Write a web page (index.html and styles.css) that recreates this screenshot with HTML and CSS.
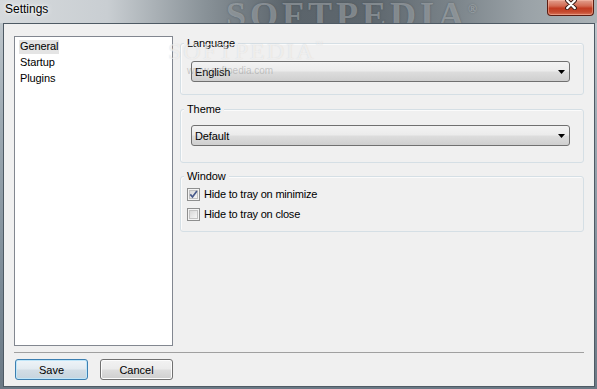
FILE: index.html
```html
<!DOCTYPE html>
<html>
<head>
<meta charset="utf-8">
<title>Settings</title>
<link rel="stylesheet" href="styles.css">
</head>
<body>
<div class="window">
  <div class="titlebar">
    <span class="title">Settings</span>
    <span class="wm-big">SOFTPEDIA<span class="reg">®</span></span>
    <button class="close" aria-label="Close">
      <svg width="12" height="11" viewBox="0 0 12 11"><path d="M2.2 1.5l7.6 7.6M9.8 1.5l-7.6 7.6" stroke="#3a1a14" stroke-width="4.2" stroke-linecap="round"/><path d="M2.2 1.5l7.6 7.6M9.8 1.5l-7.6 7.6" stroke="#ffffff" stroke-width="2.2" stroke-linecap="round"/></svg>
    </button>
  </div>
  <div class="frame">
    <div class="client">
      <div class="main">
        <ul class="list">
          <li><span class="sel">General</span></li>
          <li>Startup</li>
          <li>Plugins</li>
        </ul>
        <div class="groups">
          <div class="group g-lang">
            <span class="glabel">Language</span>
            <div class="combo"><span>English</span><svg class="arrow" width="7" height="4" viewBox="0 0 7 4"><path d="M0 0h7L3.5 4z" fill="#000"/></svg></div>
          </div>
          <div class="group g-theme">
            <span class="glabel">Theme</span>
            <div class="combo"><span>Default</span><svg class="arrow" width="7" height="4" viewBox="0 0 7 4"><path d="M0 0h7L3.5 4z" fill="#000"/></svg></div>
          </div>
          <div class="group g-win">
            <span class="glabel">Window</span>
            <label class="check">
              <svg width="13" height="13" viewBox="0 0 13 13"><defs><linearGradient id="cb1" x1="0" y1="0" x2="1" y2="1"><stop offset="0" stop-color="#d6d6d6"/><stop offset="1" stop-color="#f7f7f7"/></linearGradient></defs><rect x=".5" y=".5" width="12" height="12" fill="#f4f4f4" stroke="#8e8f8f"/><rect x="2.5" y="2.5" width="8" height="8" fill="url(#cb1)" stroke="#c2c2c2"/><path d="M3.3 6.4l2.2 2.6 4.4-6" fill="none" stroke="#47598a" stroke-width="1.7"/></svg>
              <span>Hide to tray on minimize</span>
            </label>
            <label class="check">
              <svg width="13" height="13" viewBox="0 0 13 13"><defs><linearGradient id="cb2" x1="0" y1="0" x2="1" y2="1"><stop offset="0" stop-color="#d6d6d6"/><stop offset="1" stop-color="#f7f7f7"/></linearGradient></defs><rect x=".5" y=".5" width="12" height="12" fill="#f4f4f4" stroke="#8e8f8f"/><rect x="2.5" y="2.5" width="8" height="8" fill="url(#cb2)" stroke="#c2c2c2"/></svg>
              <span>Hide to tray on close</span>
            </label>
          </div>
        </div>
      </div>
      <div class="sep"></div>
      <div class="buttons">
        <button class="btn default">Save</button>
        <button class="btn">Cancel</button>
      </div>
    </div>
  </div>
  <span class="wm-small">SOFTPEDIA<span class="tm">™</span></span>
  <span class="wm-url">www.softpedia.com</span>
</div>
</body>
</html>
```
FILE: styles.css
```css
html, body {
  margin: 0;
  padding: 0;
}
body {
  width: 597px;
  height: 389px;
  overflow: hidden;
  font-family: "Liberation Sans", Arial, sans-serif;
  font-size: 11px;
  color: #000;
  background: #8796a2;
}
.window {
  position: relative;
  width: 597px;
  height: 389px;
  display: flex;
  flex-direction: column;
  background: linear-gradient(to bottom, #c5ccd1 0%, #9fabb4 30%, #7a8995 75%, #6b7985 100%);
}
.titlebar {
  position: relative;
  height: 23px;
  flex: none;
  display: flex;
  align-items: flex-start;
  overflow: hidden;
  background: linear-gradient(to right, #d6dadd 0%, #c9ced2 18%, #8a9399 34%, #5b646b 48%, #5d666d 62%, #7b848a 76%, #9aa2a7 88%, #aab2b6 100%);
}
.title {
  padding: 1px 0 0 5px;
  font-size: 12px;
  line-height: 16px;
  color: #000;
  text-shadow: 0 0 6px #fff, 0 0 3px #fff;
  position: relative;
  z-index: 1;
}
.wm-big {
  position: absolute;
  left: 226px;
  top: -9px;
  font-family: "Liberation Serif", "Times New Roman", serif;
  font-weight: bold;
  font-size: 36px;
  line-height: 36px;
  letter-spacing: 4px;
  color: rgba(205, 210, 214, 0.42);
  text-shadow: 0 0 2px rgba(40, 45, 50, 0.35);
}
.wm-big .reg {
  font-size: 12px;
  vertical-align: 14px;
  letter-spacing: 0;
}
.close {
  margin: 0 3px 0 auto;
  width: 47px;
  height: 16px;
  padding: 0;
  border: 1px solid #5c1d12;
  border-top: none;
  border-radius: 0 0 4px 4px;
  background: linear-gradient(to bottom, #e2a08f 0%, #d26a52 40%, #c13c22 55%, #c54a2f 80%, #d9765c 100%);
  box-shadow: inset 0 0 0 1px rgba(255, 200, 180, 0.45);
  display: flex;
  justify-content: center;
  align-items: flex-start;
  position: relative;
  z-index: 1;
}
.close svg {
  margin-top: -1px;
}
.frame {
  flex: 1;
  padding: 0 2px 2px 3px;
}
.client {
  box-sizing: border-box;
  height: 364px;
  background: #f0f0f0;
  border: 1px solid #4e5a64;
  padding: 12px 10px 6px 10px;
}
.main {
  display: flex;
  gap: 7px;
}
.list {
  box-sizing: border-box;
  margin: 0;
  padding: 1px 4px;
  list-style: none;
  width: 159px;
  height: 310px;
  background: #fff;
  border: 1px solid #828790;
}
.list li {
  height: 16px;
  line-height: 16px;
  white-space: nowrap;
  letter-spacing: -0.1px;
}
.list li:not(:first-child) {
  padding-left: 1px;
}
.sel {
  background: #e4e4e4;
  padding: 0 1px 2px;
}
.groups {
  width: 404px;
  display: flex;
  flex-direction: column;
  padding-top: 7px;
}
.group {
  position: relative;
  border: 1px solid #d5dfe5;
  border-radius: 3px;
  box-shadow: inset 1px 1px 0 #fbfbfb;
}
.glabel {
  position: absolute;
  left: 3px;
  top: -8px;
  padding: 0 3px;
  line-height: 14px;
  background: #f0f0f0;
  letter-spacing: -0.1px;
}
.g-lang {
  padding: 17px 13px 12px 10px;
}
.g-theme {
  margin-top: 14px;
  padding: 15px 13px 16px 10px;
}
.g-win {
  margin-top: 13px;
  padding: 7px 6px 7px 6px;
}
.combo {
  box-sizing: border-box;
  height: 21px;
  border: 1px solid #707070;
  border-radius: 3px;
  background: linear-gradient(to bottom, #f3f3f3 0%, #ebebeb 48%, #dddddd 52%, #cfcfcf 100%);
  display: flex;
  align-items: center;
  padding-left: 3px;
  letter-spacing: -0.1px;
}
.arrow {
  margin-left: auto;
  margin-right: 4px;
}
.check {
  display: flex;
  align-items: center;
  gap: 4px;
  height: 20px;
  letter-spacing: -0.2px;
}
.sep {
  width: 570px;
  height: 1px;
  margin-top: 6px;
  background: #a0a0a0;
}
.buttons {
  display: flex;
  gap: 12px;
  margin-top: 6px;
  padding-left: 1px;
}
.btn {
  box-sizing: border-box;
  width: 73px;
  height: 21px;
  padding: 0;
  border: 1px solid #707070;
  border-radius: 3px;
  font-family: "Liberation Sans", Arial, sans-serif;
  font-size: 11px;
  color: #000;
  background: linear-gradient(to bottom, #f2f2f2 0%, #ebebeb 48%, #dddddd 52%, #cfcfcf 100%);
  box-shadow: inset 0 0 0 1px #fcfcfc;
}
.btn.default {
  border-color: #3c7fb1;
  background: linear-gradient(to bottom, #eef4f8 0%, #e2eaf0 48%, #d2dde5 52%, #c6d4de 100%);
  box-shadow: inset 0 0 0 1px #bfe6f9;
}
.wm-small {
  position: absolute;
  left: 168px;
  top: 33px;
  font-family: "Liberation Serif", "Times New Roman", serif;
  font-size: 24px;
  line-height: 24px;
  letter-spacing: 2px;
  color: rgba(255, 255, 255, 0.6);
  text-shadow: 0 0 1px rgba(120, 120, 120, 0.25);
  pointer-events: none;
}
.wm-small .tm {
  font-size: 8px;
  vertical-align: 12px;
}
.wm-url {
  position: absolute;
  left: 187px;
  top: 65px;
  font-size: 10px;
  line-height: 12px;
  color: rgba(140, 140, 140, 0.45);
  pointer-events: none;
}
```
